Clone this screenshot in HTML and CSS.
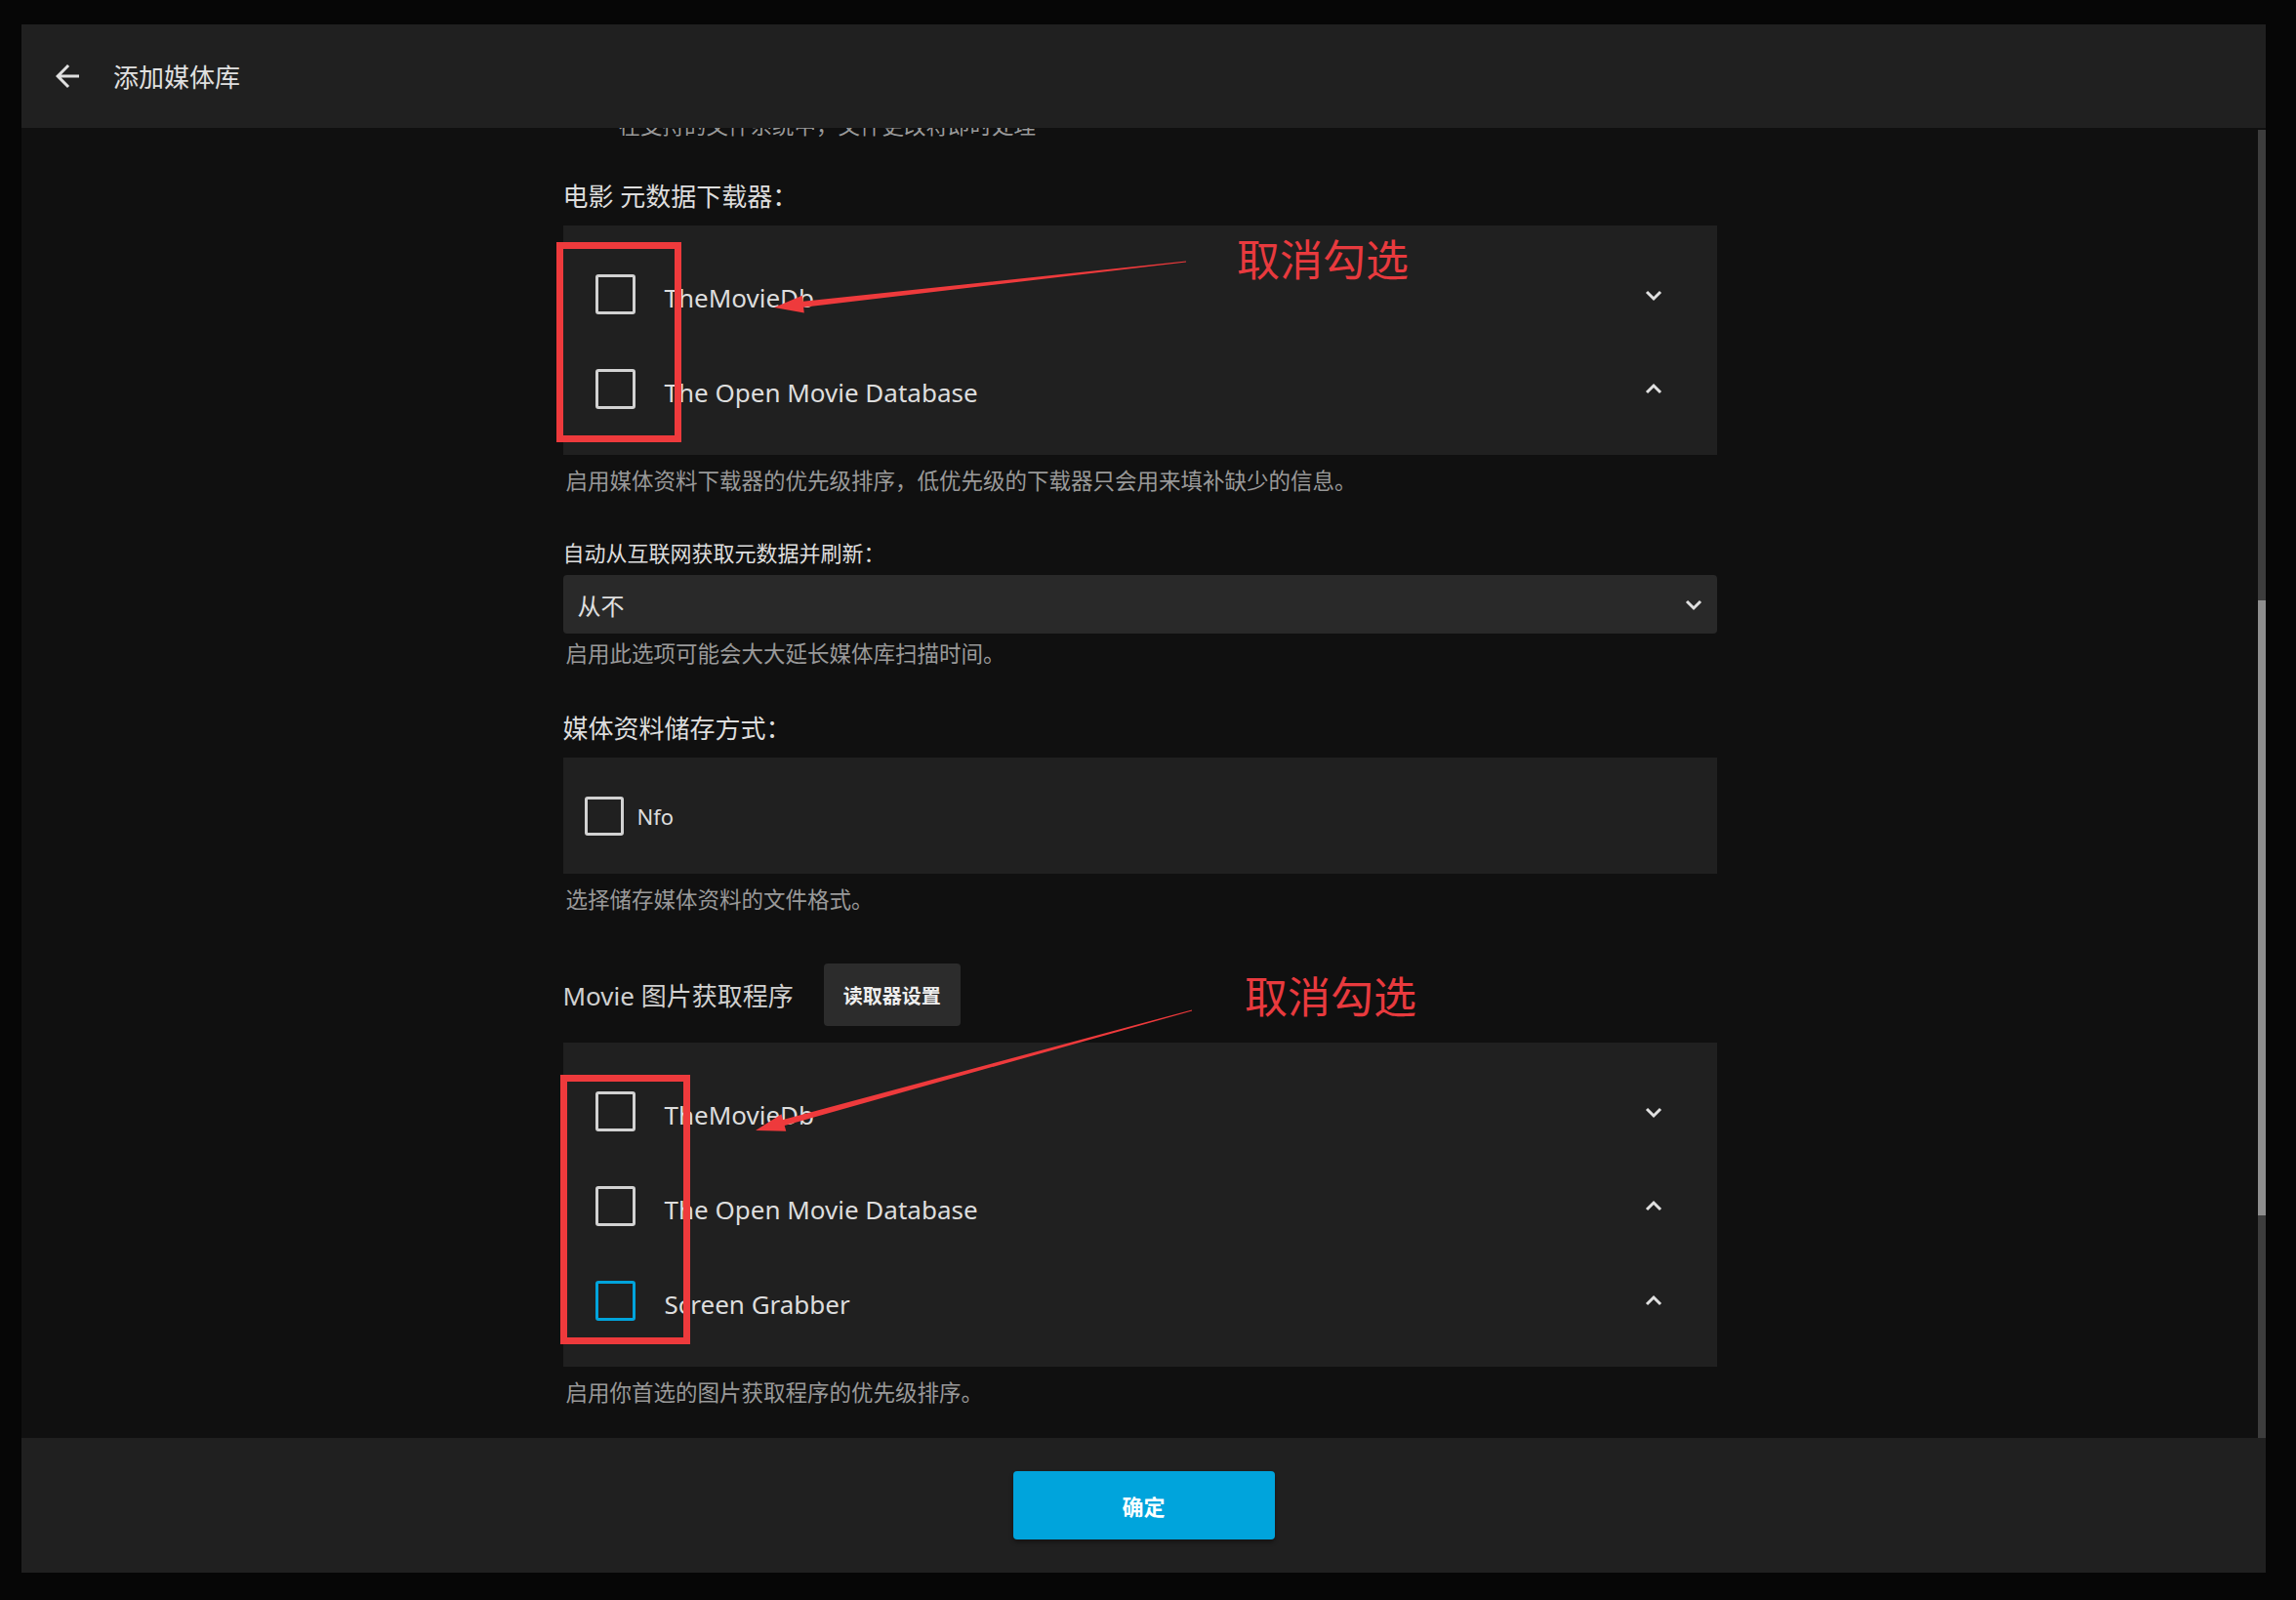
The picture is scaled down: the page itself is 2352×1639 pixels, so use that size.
FILE: index.html
```html
<!DOCTYPE html>
<html lang="zh-CN">
<head>
<meta charset="utf-8">
<title>添加媒体库</title>
<link rel="stylesheet" href="styles.css">
</head>
<body>
<div class="page">
  <div class="dialog">
    <header class="dlg-header">
      <svg class="back" viewBox="0 0 24 24" width="36" height="36"><path fill="#e0e0e0" d="M20 11H7.83l5.59-5.59L12 4l-8 8 8 8 1.41-1.41L7.83 13H20v-2z"/></svg>
      <h1 class="dlg-title">添加媒体库</h1>
    </header>
    <div class="dlg-body">
      <div class="scroll">
        <div class="column">
          <div class="help cut">在支持的文件系统中，文件更改将即时处理</div>

          <h2 class="heading first">电影 元数据下载器：</h2>
          <div class="list">
            <div class="row">
              <span class="cb"></span><span class="item-name">TheMovieDb</span>
              <svg class="chev" viewBox="0 0 20 14" width="20" height="14"><polyline points="3,4 10,11 17,4"/></svg>
            </div>
            <div class="row">
              <span class="cb"></span><span class="item-name">The Open Movie Database</span>
              <svg class="chev" viewBox="0 0 20 14" width="20" height="14"><polyline points="3,10 10,3 17,10"/></svg>
            </div>
          </div>
          <div class="help">启用媒体资料下载器的优先级排序，低优先级的下载器只会用来填补缺少的信息。</div>

          <div class="select-label">自动从互联网获取元数据并刷新：</div>
          <div class="select">
            <span>从不</span>
            <svg class="chev" viewBox="0 0 20 14" width="20" height="14"><polyline points="3,4 10,11 17,4"/></svg>
          </div>
          <div class="help help-tight">启用此选项可能会大大延长媒体库扫描时间。</div>

          <h2 class="heading">媒体资料储存方式：</h2>
          <div class="saver-box">
            <span class="cb"></span><span class="saver-name">Nfo</span>
          </div>
          <div class="help">选择储存媒体资料的文件格式。</div>

          <div class="fetch-row">
            <span class="fetch-title">Movie 图片获取程序</span>
            <button class="btn-secondary">读取器设置</button>
          </div>
          <div class="list list2">
            <div class="row">
              <span class="cb"></span><span class="item-name">TheMovieDb</span>
              <svg class="chev" viewBox="0 0 20 14" width="20" height="14"><polyline points="3,4 10,11 17,4"/></svg>
            </div>
            <div class="row">
              <span class="cb"></span><span class="item-name">The Open Movie Database</span>
              <svg class="chev" viewBox="0 0 20 14" width="20" height="14"><polyline points="3,10 10,3 17,10"/></svg>
            </div>
            <div class="row">
              <span class="cb cb-focus"></span><span class="item-name">Screen Grabber</span>
              <svg class="chev" viewBox="0 0 20 14" width="20" height="14"><polyline points="3,10 10,3 17,10"/></svg>
            </div>
          </div>
          <div class="help">启用你首选的图片获取程序的优先级排序。</div>
        </div>
      </div>
      <div class="scrollbar"><div class="thumb"></div></div>
    </div>
    <footer class="dlg-footer">
      <button class="btn-primary">确定</button>
    </footer>
  </div>

  <svg class="annot" viewBox="0 0 2352 1639" width="2352" height="1639">
    <rect x="573.5" y="251.5" width="121" height="198" fill="none" stroke="#ee3a3c" stroke-width="7"/>
    <rect x="577.5" y="1104.5" width="126" height="269" fill="none" stroke="#ee3a3c" stroke-width="7"/>
    <polygon fill="#ee3a3c" points="1215,267.5 822.5,308.7 821.8,302.8 793,315 823.8,320.6 823.1,314.7 1215,268.5"/>
    <polygon fill="#ee3a3c" points="1220.9,1034.5 802.1,1147.1 800.5,1141.3 774,1158 805.3,1158.7 803.7,1152.9 1221.1,1035.5"/>
  </svg>
  <div class="note note1">取消勾选</div>
  <div class="note note2">取消勾选</div>
</div>
</body>
</html>
```

FILE: styles.css
```css
* { box-sizing: border-box; }
html, body { margin: 0; padding: 0; }
body {
  background: #060606;
  font-family: "Noto Sans", "Noto Sans CJK TC", "Noto Sans CJK SC", sans-serif;
  color: #dddddd;
}
.page {
  position: relative;
  width: 2352px;
  height: 1639px;
  padding: 25px 31px 28px 22px;
}
.dialog {
  width: 2299px;
  height: 1586px;
  display: flex;
  flex-direction: column;
  background: #101010;
}
.dlg-header {
  height: 106px;
  flex: none;
  background: #202020;
  display: flex;
  align-items: center;
  padding-left: 29px;
}
.back { display: block; flex: none; }
.dlg-title {
  margin: 0 0 0 29px;
  font-size: 26px;
  font-weight: normal;
  color: #e0e0e0;
}
.dlg-body {
  flex: 1;
  display: flex;
  min-height: 0;
}
.scroll {
  flex: 1;
  overflow: hidden;
}
.scrollbar {
  width: 8px;
  flex: none;
  background: #3d3d3d;
  margin-top: 2px;
}
.thumb {
  margin-top: 482px;
  height: 630px;
  background: #8e8e8e;
}
.column {
  width: 1182px;
  margin: 0 auto;
}
.help {
  font-size: 22.5px;
  line-height: 31px;
  color: #999999;
  margin-top: 11px;
  padding-left: 3px;
}
.help.cut {
  margin-top: -18px;
  padding-left: 57px;
}
.help.help-tight { margin-top: 5px; }
.heading {
  margin: 43px 0 0;
  font-size: 26px;
  line-height: 36px;
  font-weight: normal;
  color: #dddddd;
}
.heading.first { margin-top: 39px; }
.list {
  margin-top: 12px;
  background: #202020;
  padding: 22px 0 19px;
}
.list2 { margin-top: 17px; }
.row {
  height: 97px;
  display: flex;
  align-items: center;
  padding-left: 33px;
  padding-right: 55px;
}
.cb {
  width: 41px;
  height: 41px;
  flex: none;
  border: 3px solid #d2d2d2;
  border-radius: 3px;
}
.cb-focus { border-color: #00a4dc; }
.item-name {
  margin-left: 30px;
  margin-top: 6px;
  font-size: 26px;
  color: #dddddd;
  flex: 1;
}
.chev {
  flex: none;
  display: block;
}
.chev polyline {
  fill: none;
  stroke: #e0e0e0;
  stroke-width: 3;
}
.select-label {
  margin-top: 43px;
  font-size: 22px;
  line-height: 31px;
  color: #dddddd;
}
.select {
  margin-top: 7px;
  height: 60px;
  background: #292929;
  border-radius: 4px;
  display: flex;
  align-items: center;
  justify-content: space-between;
  padding: 0 14px 0 15px;
  font-size: 24px;
  color: #e0e0e0;
}
.saver-box {
  margin-top: 12px;
  height: 119px;
  background: #202020;
  display: flex;
  align-items: center;
  padding-left: 22px;
}
.saver-box .cb { width: 40px; height: 40px; }
.saver-name {
  margin-left: 14px;
  font-size: 22px;
  color: #dddddd;
}
.fetch-row {
  margin-top: 50px;
  height: 64px;
  display: flex;
  align-items: center;
}
.fetch-title {
  font-size: 26px;
  color: #d0d0d0;
}
.btn-secondary {
  margin-left: 31px;
  height: 64px;
  width: 140px;
  border: 0;
  border-radius: 4px;
  background: #2c2c2c;
  color: #eeeeee;
  font-family: "Noto Sans", "Noto Sans CJK SC", sans-serif;
  font-size: 20px;
  font-weight: bold;
  padding: 0;
}
.dlg-footer {
  height: 138px;
  flex: none;
  background: #202020;
  display: flex;
  align-items: center;
  justify-content: center;
}
.btn-primary {
  width: 268px;
  height: 70px;
  border: 0;
  border-radius: 4px;
  background: #00a4dc;
  color: #ffffff;
  font-family: "Noto Sans", "Noto Sans CJK SC", sans-serif;
  font-size: 22px;
  font-weight: bold;
  box-shadow: 0 3px 4px rgba(0, 0, 0, 0.35);
  padding: 0;
}
.annot {
  position: absolute;
  left: 0;
  top: 0;
  pointer-events: none;
}
.note {
  position: absolute;
  font-family: "Noto Sans CJK SC", sans-serif;
  font-size: 44px;
  line-height: 44px;
  color: #e83a3e;
  white-space: nowrap;
}
.note1 { left: 1267px; top: 242px; }
.note2 { left: 1275px; top: 997px; }
```
